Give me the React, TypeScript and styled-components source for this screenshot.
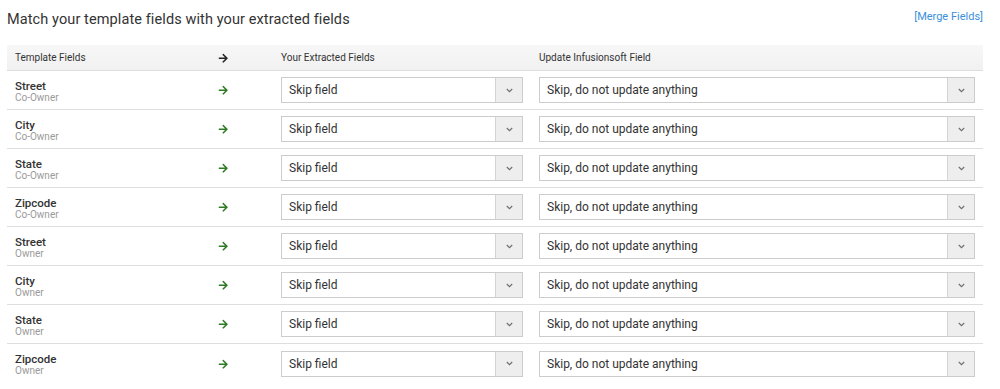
import React from "react";
import styled, { createGlobalStyle } from "styled-components";
import { FaArrowRight } from "react-icons/fa";

const Global = createGlobalStyle`
  html, body { margin: 0; padding: 0; background: #fff; }
  body { font-family: Roboto, "Liberation Sans", Arial, sans-serif; color: #333; }
`;

const Page = styled.div`
  width: 1000px;
  height: 389px;
  overflow: hidden;
  padding: 0 17px 0 7px;
  box-sizing: border-box;
`;

const TopBar = styled.div`
  display: flex;
  justify-content: space-between;
  align-items: center;
  height: 38px;
`;

const Title = styled.h2`
  margin: 0;
  font-size: 14.5px;
  font-weight: 400;
  color: #333;
  letter-spacing: 0.1px;
`;

const MergeLink = styled.a`
  font-size: 11px;
  color: #3a8fd9;
  text-decoration: none;
  margin-top: -5px;
  margin-right: 0;
`;

const Table = styled.div`
  margin-top: 7px;
  width: 976px;
`;

const Row = styled.div<{ $head?: boolean }>`
  display: grid;
  grid-template-columns: 150px 84px 242px 436px;
  column-gap: 16px;
  align-items: center;
  padding: 0 8px;
  height: ${(p) => (p.$head ? "26px" : "39px")};
  box-sizing: border-box;
  background: ${(p) => (p.$head ? "linear-gradient(#f7f7f7, #f1f1f1)" : "#fff")};
  border-bottom: 1px solid #dedede;
  &:last-child { border-bottom: none; }
`;

const HeadCell = styled.div`
  font-size: 10px;
  color: #333;
`;

const ArrowCell = styled.div<{ $green?: boolean }>`
  display: flex;
  justify-content: center;
  color: ${(p) => (p.$green ? "#2f7a24" : "#222")};
  font-size: 10.5px;
  padding-top: 1px;
`;

const FieldName = styled.div`
  display: flex;
  flex-direction: column;
  line-height: 11px;
  padding-top: 3px;
`;

const Name = styled.span`
  font-size: 11.5px;
  font-weight: 500;
  color: #333;
`;

const Sub = styled.span`
  font-size: 10px;
  color: #9a9a9a;
`;

const Select = styled.div`
  display: flex;
  height: 26px;
  border: 1px solid #cccccc;
  box-sizing: border-box;
  background: #fff;
`;

const SelectValue = styled.div`
  flex: 1;
  display: flex;
  align-items: center;
  padding-left: 7px;
  font-size: 12px;
  color: #333;
`;

const SelectButton = styled.div`
  width: 26px;
  border-left: 1px solid #d4d4d4;
  background: #eeeeee;
  display: flex;
  align-items: center;
  justify-content: center;
`;

const Chevron = () => (
  <svg width="7" height="5" viewBox="0 0 7 5">
    <path d="M0.8 1 L3.5 3.6 L6.2 1" fill="none" stroke="#6f6f6f" strokeWidth="1.2" />
  </svg>
);

const rows = [
  ["Street", "Co-Owner"],
  ["City", "Co-Owner"],
  ["State", "Co-Owner"],
  ["Zipcode", "Co-Owner"],
  ["Street", "Owner"],
  ["City", "Owner"],
  ["State", "Owner"],
  ["Zipcode", "Owner"],
];

export default function App() {
  return (
    <Page>
      <Global />
      <TopBar>
        <Title>Match your template fields with your extracted fields</Title>
        <MergeLink href="#">[Merge Fields]</MergeLink>
      </TopBar>
      <Table>
        <Row $head>
          <HeadCell>Template Fields</HeadCell>
          <ArrowCell><FaArrowRight /></ArrowCell>
          <HeadCell>Your Extracted Fields</HeadCell>
          <HeadCell>Update Infusionsoft Field</HeadCell>
        </Row>
        {rows.map(([n, s], i) => (
          <Row key={i}>
            <FieldName>
              <Name>{n}</Name>
              <Sub>{s}</Sub>
            </FieldName>
            <ArrowCell $green><FaArrowRight /></ArrowCell>
            <Select>
              <SelectValue>Skip field</SelectValue>
              <SelectButton><Chevron /></SelectButton>
            </Select>
            <Select>
              <SelectValue>Skip, do not update anything</SelectValue>
              <SelectButton><Chevron /></SelectButton>
            </Select>
          </Row>
        ))}
      </Table>
    </Page>
  );
}
